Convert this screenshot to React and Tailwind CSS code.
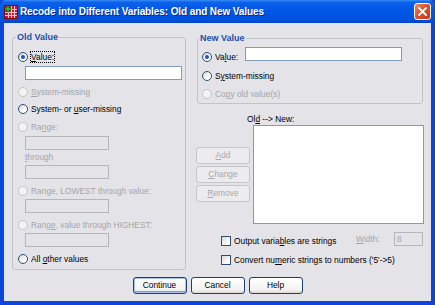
import React from "react";

function Radio({ checked, disabled }) {
  return (
    <span
      className={
        disabled
          ? "w-[10px] h-[10px] rounded-full border border-[#c4c4c4] bg-[#f3f3f3] shrink-0"
          : "w-[10px] h-[10px] rounded-full border border-[#2f4f72] bg-[linear-gradient(135deg,#d9d8d2,#ffffff_70%)] shrink-0 flex items-center justify-center"
      }
    >
      {checked && <span className="w-[4px] h-[4px] rounded-full bg-[#2452c2]" />}
    </span>
  );
}

function RadioRow({ children, checked, disabled, className = "" }) {
  return (
    <div className={`flex items-center h-[16px] ${className}`}>
      <Radio checked={checked} disabled={disabled} />
      <span className={disabled ? "ml-[3px] text-[#a5a5a8]" : "ml-[3px]"}>{children}</span>
    </div>
  );
}

function Box({ className = "" }) {
  return <div className={`h-[14px] border border-[#b6b6ba] ${className}`} />;
}

function Checkbox() {
  return (
    <span className="w-[10px] h-[10px] border border-[#2f4f72] bg-[linear-gradient(135deg,#d9d8d2,#ffffff_75%)] shrink-0" />
  );
}

function XPButton({ children, def, disabled, className = "" }) {
  if (disabled) {
    return (
      <div className={`h-[17px] rounded-[3px] border border-[#c6c6c9] bg-[#ececef] text-[#a8a8ab] flex items-center justify-center ${className}`}>
        {children}
      </div>
    );
  }
  return (
    <div
      className={
        def
          ? `h-[17px] rounded-[3px] border border-[#1f3f6e] bg-[linear-gradient(to_bottom,#ffffff,#f2f2f0_80%,#d9d8d4)] shadow-[inset_0_0_0_1px_#a8c2ee,inset_0_-1px_0_1px_#7f9ee0] flex items-center justify-center ${className}`
          : `h-[17px] rounded-[3px] border border-[#1f3f6e] bg-[linear-gradient(to_bottom,#ffffff,#f2f2f0_80%,#d9d8d4)] flex items-center justify-center ${className}`
      }
    >
      {children}
    </div>
  );
}

function TitleBar() {
  return (
    <div className="h-[23px] flex items-center pl-[4px] pr-[4px] rounded-t-[6px] bg-[linear-gradient(to_bottom,#3b8cf6_0%,#0b62ea_10%,#0056e6_45%,#0052df_85%,#0044c9_100%)]">
      <svg width="14" height="14" viewBox="0 0 14 14" className="shrink-0">
        <rect x="0.5" y="0.5" width="13" height="13" fill="#d2152e" stroke="#7a0a14" />
        <path d="M1 4.5H13M1 7.5H13M1 10.5H13M4.5 1V13M7.5 1V13M10.5 1V13" stroke="#f7c6cc" strokeWidth="1" />
        <path d="M3 1H5V3H7V5H5V7H3V5H1V3H3Z" fill="#2fc42f" stroke="#0b5a0b" strokeWidth="0.6" />
      </svg>
      <span className="ml-[2px] text-white font-bold text-[10px] tracking-[-0.1px] leading-none [text-shadow:1px_1px_0_#0a2a8a]">
        Recode into Different Variables: Old and New Values
      </span>
      <div className="ml-auto w-[17px] h-[17px] rounded-[3px] border border-white bg-[linear-gradient(135deg,#f08a68,#e1502a_45%,#c93a14)] flex items-center justify-center">
        <svg width="9" height="9" viewBox="0 0 9 9">
          <path d="M1 1L8 8M8 1L1 8" stroke="white" strokeWidth="1.8" strokeLinecap="square" />
        </svg>
      </div>
    </div>
  );
}

function OldGroup() {
  return (
    <fieldset className="w-[174px] border border-[#c3c2c7] rounded-[3px] pl-[5px] pr-[2px] pt-[6px] pb-[2px]">
      <legend className="-ml-[2px] px-[1px] text-[9px] font-bold leading-[12px] text-[#1d50a6]">Old Value</legend>
      <div className="flex items-center h-[16px]">
        <Radio checked />
        <span className="ml-[2px] border border-dotted border-black leading-[10px]">
          <u>V</u>alue:
        </span>
      </div>
      <div className="mt-[1px] ml-[7px] w-[157px] h-[14px] bg-white border border-[#7f9db9]" />
      <RadioRow disabled className="mt-[4px]">
        <u>S</u>ystem-missing
      </RadioRow>
      <RadioRow className="mt-[1px]">
        System- or <u>u</u>ser-missing
      </RadioRow>
      <RadioRow disabled className="mt-[2px]">
        Ra<u>n</u>ge:
      </RadioRow>
      <Box className="mt-[1px] ml-[7px] w-[84px]" />
      <div className="h-[15px] ml-[7px] flex items-center text-[#a5a5a8]">
        <u>t</u>hrough
      </div>
      <Box className="ml-[7px] w-[84px]" />
      <RadioRow disabled className="mt-[4px]">
        Ran<u>g</u>e, LOWEST through value:
      </RadioRow>
      <Box className="ml-[7px] w-[84px]" />
      <RadioRow disabled className="mt-[4px]">
        Rang<u>e</u>, value through HIGHEST:
      </RadioRow>
      <Box className="ml-[7px] w-[84px]" />
      <RadioRow className="mt-[4px]">
        All <u>o</u>ther values
      </RadioRow>
    </fieldset>
  );
}

function RightColumn() {
  return (
    <div className="ml-[10px] w-[228px] flex flex-col">
      <fieldset className="mt-[1px] ml-[1px] w-[226px] border border-[#c3c2c7] rounded-[3px] pl-[4px] pt-[3px] pb-[1px]">
        <legend className="-ml-[3px] px-[1px] text-[9px] font-bold leading-[12px] text-[#1d50a6]">New Value</legend>
        <div className="flex items-start h-[18px]">
          <div className="flex items-center h-[16px] mt-[2px]">
            <Radio checked />
            <span className="ml-[3px] w-[30px]">
              Va<u>l</u>ue:
            </span>
          </div>
          <div className="w-[157px] h-[14px] bg-white border border-[#7f9db9]" />
        </div>
        <RadioRow className="mt-[3px]">
          S<u>y</u>stem-missing
        </RadioRow>
        <RadioRow disabled className="mt-[2px]">
          Co<u>p</u>y old value(s)
        </RadioRow>
      </fieldset>

      <div className="flex mt-[10px] gap-[3px]">
        <div className="w-[54px] pt-[33px] flex flex-col gap-[2px]">
          <XPButton disabled>
            <span>
              <u>A</u>dd
            </span>
          </XPButton>
          <XPButton disabled>
            <span>
              <u>C</u>hange
            </span>
          </XPButton>
          <XPButton disabled>
            <span>
              <u>R</u>emove
            </span>
          </XPButton>
        </div>
        <div className="w-[171px] flex flex-col">
          <div className="-ml-[6px] h-[11px] leading-[11px]">
            Ol<u>d</u> --&gt; New:
          </div>
          <div className="h-[99px] bg-white border border-[#7f9db9]" />
        </div>
      </div>

      <div className="flex items-start mt-[8px] pl-[25px]">
        <div className="w-[135px] h-[16px] mt-[1px] flex items-center">
          <Checkbox />
          <span className="ml-[3px]">
            Output varia<u>b</u>les are strings
          </span>
        </div>
        <div className="w-[38px] h-[14px] leading-[14px] text-[#a5a5a8]">
          <u>W</u>idth:
        </div>
        <div className="w-[29px] h-[14px] border border-[#b6b6ba] text-[#a5a5a8] leading-[12px] pl-[2px]">8</div>
      </div>
      <div className="flex items-center h-[16px] mt-[3px] pl-[25px]">
        <Checkbox />
        <span className="ml-[3px]">
          Convert nu<u>m</u>eric strings to numbers ('5'-&gt;5)
        </span>
      </div>
    </div>
  );
}

export default function App() {
  return (
    <div className="w-[435px] h-[305px] flex flex-col font-['Liberation_Sans',Arial,sans-serif] text-[8.4px] text-black overflow-hidden bg-[#0a45dc]">
      <TitleBar />
      <div className="flex-1 flex flex-col border-x-4 border-b-4 border-[#0a45dc] bg-[#e4e3e8]">
        <div className="flex mt-[8px] ml-[8px]">
          <OldGroup />
          <RightColumn />
        </div>
        <div className="flex justify-center gap-[4px] mt-[7px]">
          <XPButton def className="w-[54px]">Continue</XPButton>
          <XPButton className="w-[54px]">Cancel</XPButton>
          <XPButton className="w-[54px]">Help</XPButton>
        </div>
      </div>
    </div>
  );
}
